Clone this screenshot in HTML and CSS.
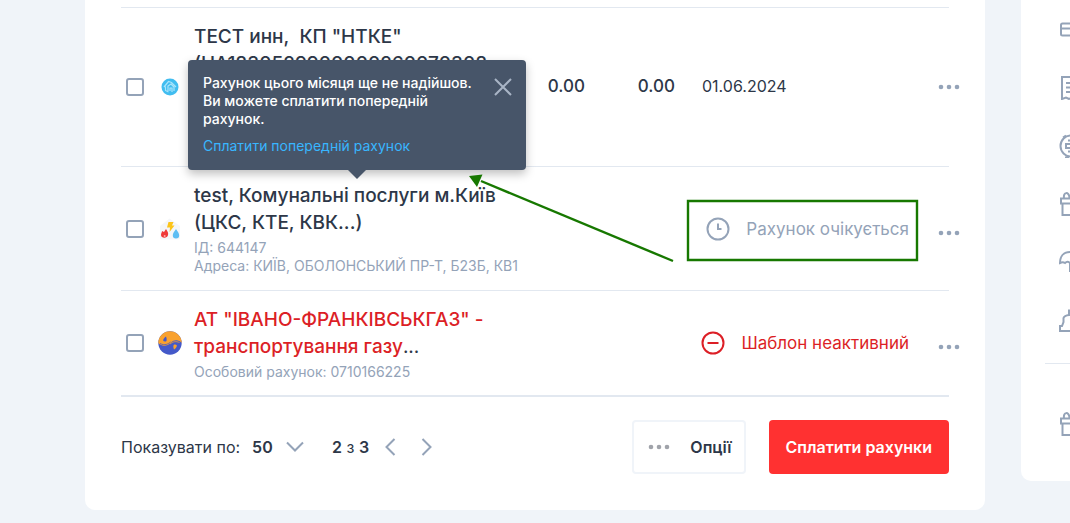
FILE: index.html
```html
<!DOCTYPE html>
<html lang="uk">
<head>
<meta charset="utf-8">
<meta name="viewport" content="width=device-width, initial-scale=1">
<title>Рахунки</title>
<link rel="stylesheet" href="styles.css">
</head>
<body>
<svg class="sprite" aria-hidden="true">
  <symbol id="dots" viewBox="0 0 22 6"><circle cx="3" cy="3" r="2.3"/><circle cx="11" cy="3" r="2.3"/><circle cx="19" cy="3" r="2.3"/></symbol>
  <symbol id="gift" viewBox="0 0 24 24"><path d="M2 6.500h20v5H2zM3.500 11.500h17V23h-17zM12 6.500V23M5 6C4 0 10-1 10.500 6M19 6C20 0 14-1 13.500 6"/></symbol>
</svg>
<div class="page">
  <main class="card">
    <table class="bills">
      <colgroup><col class="col-check"><col class="col-logo"><col><col class="col-sum"><col class="col-debt"><col class="col-state"><col class="col-menu"></colgroup>
      <tbody>
        <tr class="row-tall">
          <td><input class="check" type="checkbox" aria-label="ТЕСТ инн"></td>
          <td><svg class="logo" viewBox="0 0 24 24"><circle cx="12" cy="12" r="8.500" fill="#41bdf0"/><path d="M6 12l4.500-5.500 3 1 4.500 4.500M7.500 11.500v4l3 1.500M10 16v-5l3-2 3 3v4M12 16v-3h2v4" fill="none" stroke="#a9e4fb" stroke-width="1.200"/></svg></td>
          <td class="name"><div class="title">ТЕСТ инн,&nbsp; КП "НТКЕ"<br>(UA183052990000026007<wbr>0308</div></td>
          <td class="amount">0.00</td>
          <td class="amount">0.00</td>
          <td class="date">01.06.2024</td>
          <td class="menu"><button class="more" aria-label="Дії"><svg><use href="#dots"/></svg></button></td>
        </tr>
        <tr class="row-state">
          <td><input class="check" type="checkbox" aria-label="Комунальні послуги"></td>
          <td><svg class="logo" viewBox="0 0 24 24"><path d="M2 9L11.500 1.500 22 9v12q0 1.500-1.500 1.500h-17Q2 22.500 2 21z" fill="#f4f6f9"/><path d="M10.500 5h5l-1.500 3.500h2.500L11.500 15l.5-4.500H9z" fill="#fcc419"/><path d="M4 14l2 1 2-3c2 3 2.500 4 2 6-.5 3.500-7 3.500-7 0 0-2 1-2.500 1-4z" fill="#ef3838"/><path d="M18 12c2 3 3.200 4.500 3.200 6.200a3.200 3.200 0 0 1-6.400 0C14.800 16.500 16 15 18 12z" fill="#5cbdf3"/><circle cx="6.700" cy="19" r="1" fill="#fba9a9"/></svg></td>
          <td class="name" colspan="2">
            <div class="payee">
              <div class="title">test, Комунальні послуги м.Київ<br>(ЦКС, КТЕ, КВК...)</div>
              <div class="detail">ІД: 644147<br>Адреса: КИЇВ, ОБОЛОНСЬКИЙ ПР-Т, Б23Б, КВ1</div>
              <div class="tooltip" role="dialog" aria-label="Рахунок не надійшов">
                <div class="tooltip-head">
                  <p>Рахунок цього місяця ще не надійшов.<br>Ви можете сплатити попередній<br>рахунок.</p>
                  <button class="close" aria-label="Закрити"><svg viewBox="0 0 18 18"><path d="M1 1l16 16M17 1L1 17"/></svg></button>
                </div>
                <a href="#">Сплатити попередній рахунок</a>
              </div>
            </div>
          </td>
          <td colspan="2"><div class="state">
            <svg viewBox="0 0 24 24"><circle cx="12" cy="12" r="10.500"/><path d="M12 6.500v5.500h3.500"/></svg><span>Рахунок очікується</span></div></td>
          <td class="menu"><button class="more" aria-label="Дії"><svg><use href="#dots"/></svg></button></td>
        </tr>
        <tr class="row-state">
          <td><input class="check" type="checkbox" aria-label="Івано-Франківськгаз"></td>
          <td><svg class="logo" viewBox="0 0 24 24"><circle cx="12" cy="12" r="11.700" fill="#4459c9"/><path d="M.3 12a11.700 11.700 0 0 1 23.400 0C21 8.500 16 8.500 13 11.500 9 15.500 4 16 .3 12z" fill="#f9a12e"/><path d="M2 12.500c5 2.500 8 .5 10.500-1.500" fill="none" stroke="#4459c9" stroke-width=".8"/><path d="M12 13c3-2.500 6-3 9.500-1.500" fill="none" stroke="#f9a12e" stroke-width=".8"/><path d="M8 5.500c1 3 1 5-1 5C4 10.500 5 7.500 8 5.500z" fill="#4459c9"/><path d="M16 18.500c-1-3-1-5 1-5 3 0 2 3-1 5z" fill="#f9a12e"/></svg></td>
          <td class="name" colspan="2">
            <div class="title"><span class="alert">АТ "ІВАНО-ФРАНКІВСЬКГАЗ" -<br>транспортування газу</span><span class="rest">...</span></div>
            <div class="detail">Особовий рахунок: 0710166225</div>
          </td>
          <td colspan="2"><div class="state alert">
            <svg viewBox="0 0 24 24"><circle cx="12" cy="12" r="10.500"/><path d="M6.500 12h11"/></svg><span>Шаблон неактивний</span></div></td>
          <td class="menu"><button class="more" aria-label="Дії"><svg><use href="#dots"/></svg></button></td>
        </tr>
      </tbody>
    </table>

    <footer class="bar">
      <label for="per-page">Показувати по:</label>
      <div class="picker">
        <select id="per-page"><option>50</option></select>
        <svg viewBox="0 0 18 12"><path d="M1 1.500l8 8 8-8"/></svg>
      </div>
      <div class="pager">
        <span><b>2</b> з <b>3</b></span>
        <button aria-label="Назад"><svg viewBox="0 0 12 18"><path d="M10.500 1l-8 8 8 8"/></svg></button>
        <button aria-label="Вперед"><svg viewBox="0 0 12 18"><path d="M1.500 1l8 8-8 8"/></svg></button>
      </div>
      <button class="btn options"><svg><use href="#dots"/></svg>Опції</button>
      <button class="btn pay">Сплатити рахунки</button>
    </footer>

    <svg class="marks" viewBox="0 0 900 510" aria-hidden="true">
      <path d="M588 261L396 181" />
      <path class="tip" d="M384 176l13.500-1.500-5.500 12.500z"/>
      <path d="M603 201h229v59H603z"/>
    </svg>
  </main>

  <aside class="side">
    <ul>
      <li><svg viewBox="0 0 24 24"><path d="M3.500 5.500h21v12h-21q-1.500 0-1.500-1.500V7Q2 5.500 3.500 5.500zM2 10.500h22"/></svg></li>
      <li><svg viewBox="0 0 24 24"><path d="M3 1h19v22l-3-1.500-3 1.500-3-1.500-3 1.500-3-1.500L3 23zM7 7h10M7 11.500h10M7 16h10"/></svg></li>
      <li><svg viewBox="0 0 24 24"><circle cx="12" cy="12" r="10.500"/><path d="M4 3.500l3-2M7 22.500v1.500h3M16 10H7v4h10M9 6.500h6M9 17.500h6"/></svg></li>
      <li><svg><use href="#gift"/></svg></li>
      <li><svg viewBox="0 0 24 24"><path d="M1 13C1 6 5 2 11 2s10 4 10 11c-2-2-3.500-2-5 0-1.500-1.500-3-1.500-5 0-1.500-1.500-3.500-1.500-5 0-1.500-1-3-1-5 0zM11 12.500V22"/></svg></li>
      <li><svg viewBox="0 0 24 24"><path d="M1 23v-5h2l1.500-4v-4q1-2.500 5.500-3V2.500h4V7q4.500.5 5.500 3v4l1.500 4h2v5zM9 24h6"/></svg></li>
    </ul>
    <ul class="extra">
      <li><svg><use href="#gift"/></svg></li>
    </ul>
  </aside>
</div>
</body>
</html>
```
FILE: styles.css
```css
* { box-sizing: border-box; }
body {
  margin: 0;
  background: #f0f4f9;
  color: #2d3748;
  font: 16px/24px Inter, "Open Sans", sans-serif;
}
button, select { font: inherit; color: inherit; background: none; border: 0; padding: 0; margin: 0; cursor: pointer; }
.sprite { position: absolute; width: 0; height: 0; }

.page { display: flex; align-items: flex-start; gap: 36px; padding: 0 0 13px 85px; }
.card {
  position: relative;
  flex: 1;
  padding: 7px 36px 36px;
  background: #fff;
  border-radius: 0 0 10px 10px;
}

.bills { width: 100%; table-layout: fixed; border-collapse: separate; border-spacing: 0; border-top: 1px solid #e2e8f0; }
.col-check { width: 35px; }
.col-logo { width: 38px; }
.col-sum { width: 94px; }
.col-debt { width: 90px; }
.col-state { width: 234px; }
.col-menu { width: 40px; }
.bills td { padding: 0; vertical-align: middle; border-bottom: 1px solid #e2e8f0; }
.bills tr:last-child td { border-bottom-width: 2px; }
.row-tall { height: 159px; }
.bills .name { padding: 15px 0; vertical-align: top; white-space: nowrap; }
.bills tr:last-child .name { padding-bottom: 14px; }

.check {
  appearance: none;
  display: block;
  width: 18px;
  height: 18px;
  margin: 0 0 0 5px;
  border: 2px solid #94a3b8;
  border-radius: 3px;
}
.logo { display: block; width: 24px; height: 24px; margin-left: 2px; }
.payee { position: relative; }
.title { font-size: 19px; line-height: 27px; font-weight: 500; }
.rest { font-weight: 400; }
.detail { margin-top: 3px; font-size: 14px; line-height: 18px; color: #94a3b8; }
.bills .amount { padding-bottom: 2px; text-align: right; font-size: 17px; font-weight: 500; }
.bills .date { padding: 0 0 2px 27px; }
.menu { text-align: right; }
.more { display: block; margin-left: 29px; }
.more svg, .options svg { display: block; width: 22px; height: 6px; fill: #94a3b8; }
.row-state .more { padding-top: 8px; }

.state { display: flex; justify-content: flex-end; align-items: center; gap: 16px; font-size: 17px; color: #94a3b8; }
.state svg { width: 24px; height: 24px; fill: none; stroke: currentColor; stroke-width: 2; }
.alert, .state.alert { color: #dc1f26; }

.tooltip {
  position: absolute;
  left: -6px;
  bottom: calc(100% + 12px);
  width: 338px;
  padding: 14px 14px 15px 15px;
  border-radius: 4px;
  background: #475569;
  color: #fff;
  font-size: 14px;
  line-height: 18px;
  font-weight: 500;
  box-shadow: 0 4px 10px rgba(0, 0, 0, .25);
}
.tooltip::after {
  content: "";
  position: absolute;
  top: 100%;
  left: 50%;
  margin-left: -9px;
  border: 9px solid transparent;
  border-top-color: #475569;
  border-bottom: 0;
}
.tooltip-head { display: flex; justify-content: space-between; align-items: flex-start; }
.tooltip p { margin: 0 0 9px; }
.tooltip a { display: block; color: #38b6ff; text-decoration: none; font-weight: 400; }
.close { padding-top: 4px; }
.close svg { display: block; width: 18px; height: 18px; fill: none; stroke: #a9b5c6; stroke-width: 2; }

.bar { display: flex; align-items: center; padding-top: 23px; }
.picker { display: flex; align-items: center; gap: 13px; margin-left: 12px; }
.picker select { appearance: none; font-weight: 600; }
.picker svg { width: 18px; height: 12px; fill: none; stroke: #94a3b8; stroke-width: 2; }
.pager { display: flex; align-items: center; margin-left: 28px; }
.pager b { font-weight: 600; }
.pager button { padding-left: 15px; }
.pager button + button { padding-left: 25px; }
.pager svg { display: block; width: 12px; height: 18px; fill: none; stroke: #94a3b8; stroke-width: 2; }
.btn { height: 54px; border-radius: 4px; font-weight: 600; }
.options { display: flex; align-items: center; gap: 20px; margin: 0 23px 0 auto; padding: 0 12px 0 14px; border: 2px solid #f0f4f9; }
.options svg { fill: #a0a3aa; }
.pay { padding: 0 17px; background: #ff3131; color: #fff; }

.marks { position: absolute; top: 0; left: 0; width: 900px; height: 510px; fill: none; stroke: #177800; stroke-width: 2.4; pointer-events: none; }
.marks .tip { fill: #177800; stroke: none; }

.side { flex: 0 0 49px; overflow: hidden; padding: 1px 0 28px 24px; background: #fff; border-radius: 0 0 0 10px; }
.side ul { list-style: none; margin: 0; padding: 0 0 14px 14px; }
.side li { width: 24px; height: 58px; display: flex; align-items: center; }
.side svg { flex: none; width: 24px; height: 24px; fill: none; stroke: #94a3b8; stroke-width: 2; }
.side .extra { padding: 31px 0 0 14px; border-top: 1px solid #e2e8f0; }
```
